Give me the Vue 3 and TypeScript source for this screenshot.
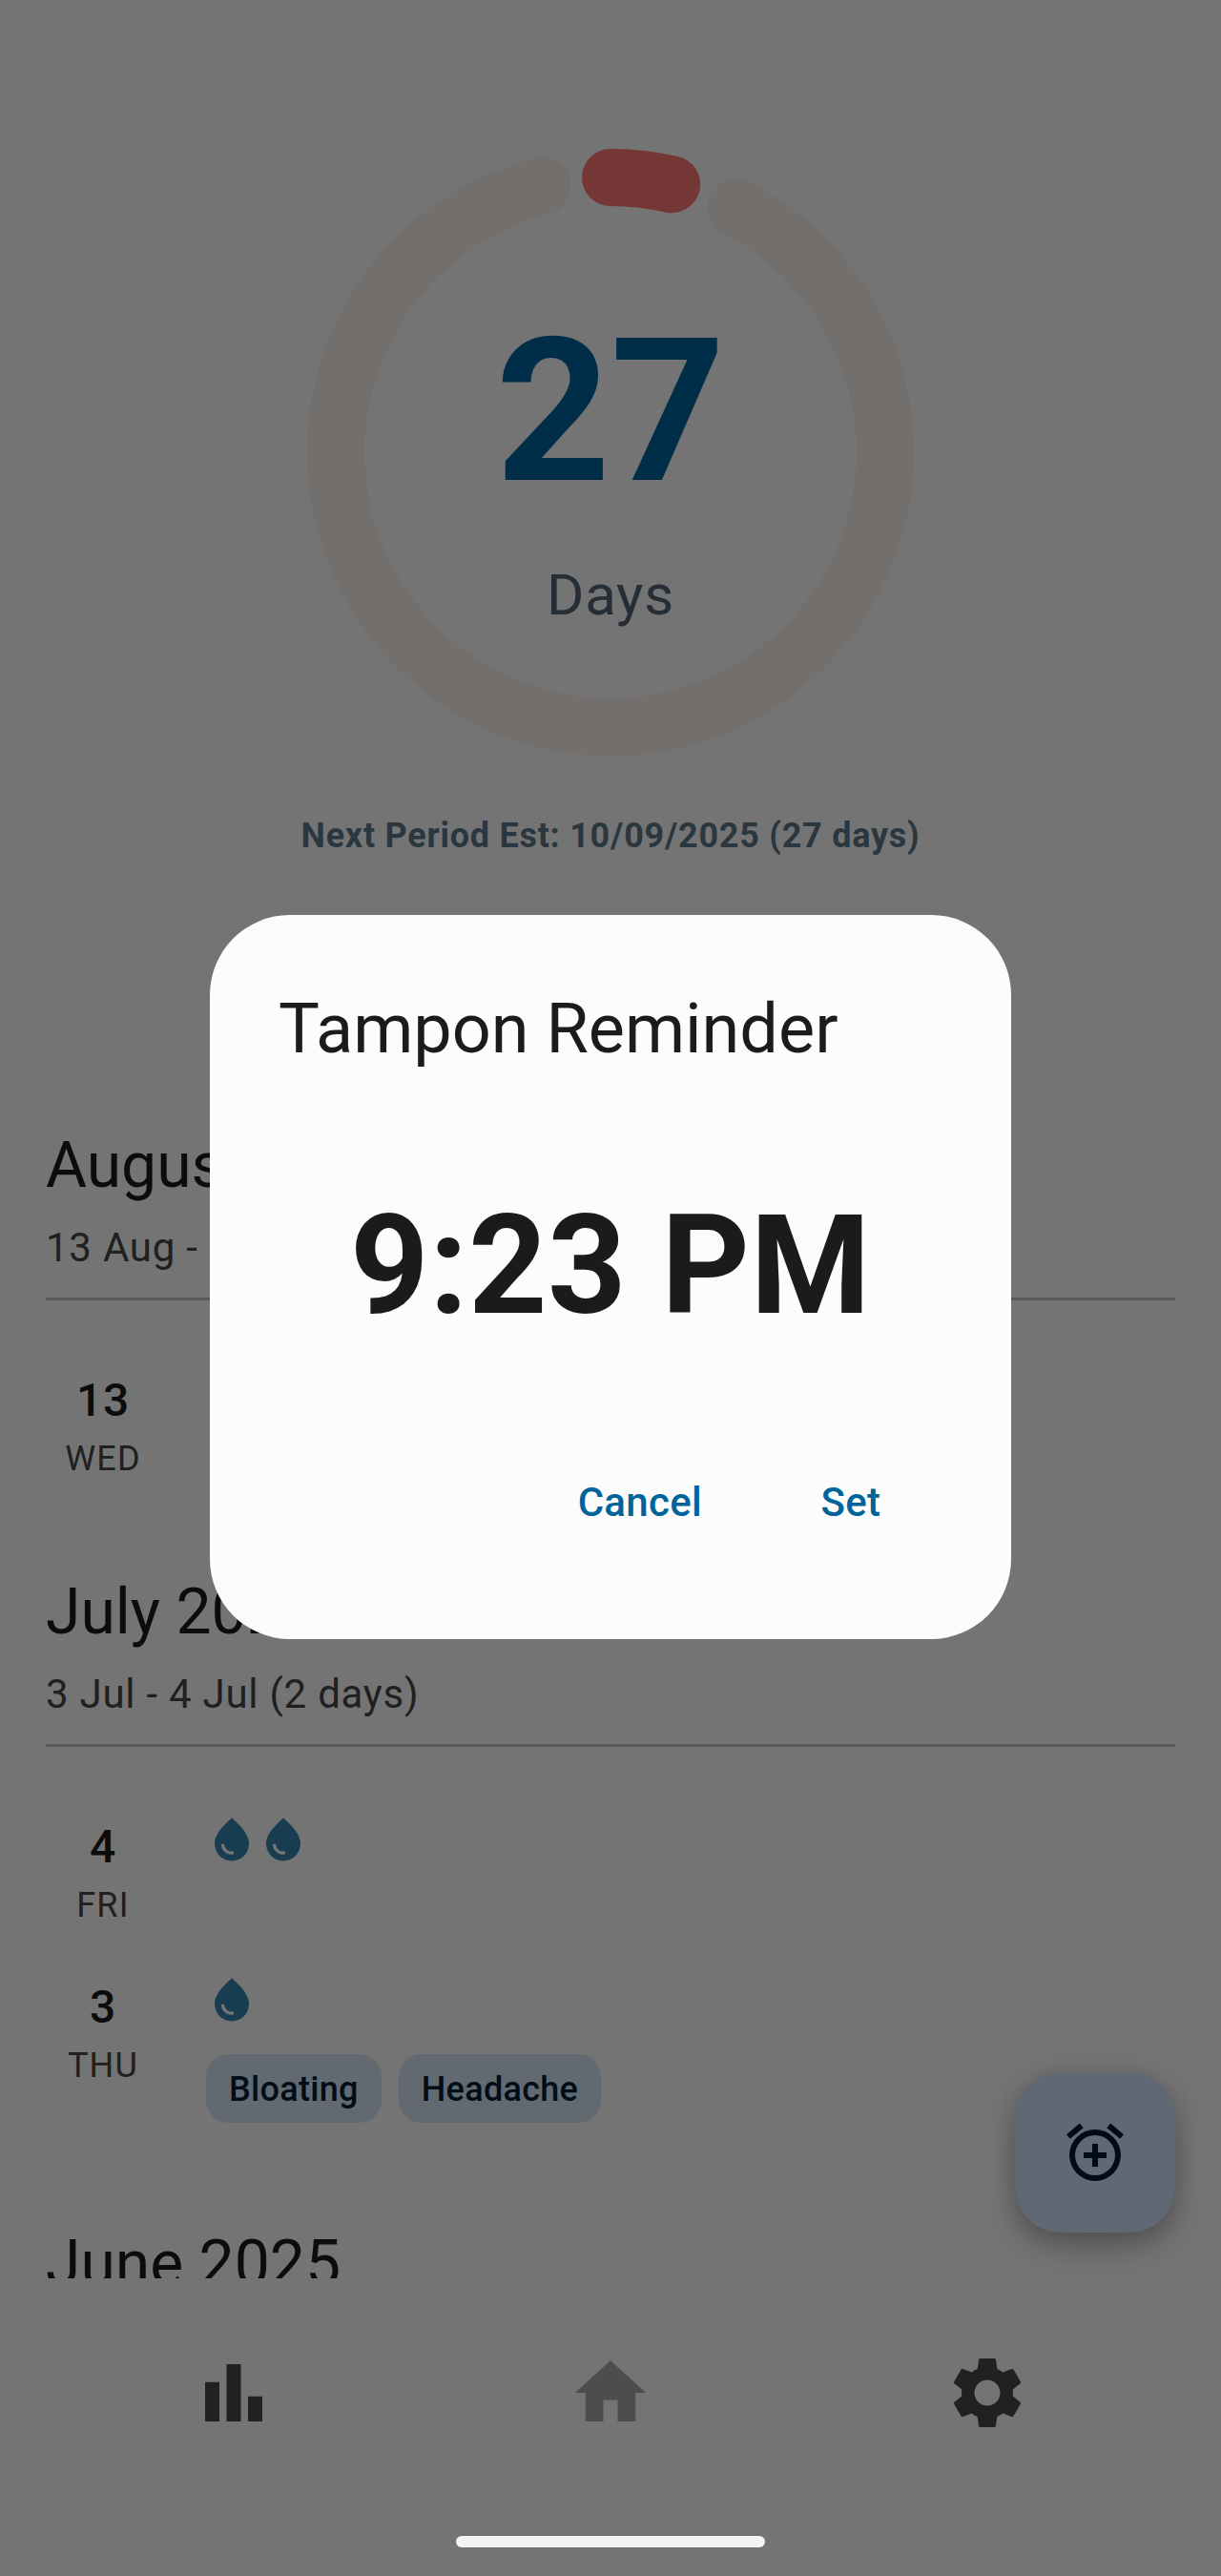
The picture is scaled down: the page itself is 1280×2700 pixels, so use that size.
<script setup lang="ts">
interface Entry {
  day: number
  weekday: string
  flow: number
  symptoms: string[]
}

interface Period {
  title: string
  range: string
  entries: Entry[]
}

const cycleLength = 28
const radius = 288
const center = 318

const point = (deg: number): string => {
  const rad = (deg * Math.PI) / 180
  return `${(center + radius * Math.sin(rad)).toFixed(2)} ${(center - radius * Math.cos(rad)).toFixed(2)}`
}

const arc = (from: number, to: number): string =>
  `M${point(from)}A${radius} ${radius} 0 ${to - from > 180 ? 1 : 0} 1 ${point(to)}`

const step = 360 / cycleLength
const elapsed = arc(0, step)
const remaining = arc(27.2, 345.6)

const periods: Period[] = [
  {
    title: 'August 2025',
    range: '13 Aug - 13 Aug (1 days)',
    entries: [{ day: 13, weekday: 'WED', flow: 0, symptoms: [] }],
  },
  {
    title: 'July 2025',
    range: '3 Jul - 4 Jul (2 days)',
    entries: [
      { day: 4, weekday: 'FRI', flow: 2, symptoms: [] },
      { day: 3, weekday: 'THU', flow: 1, symptoms: ['Bloating', 'Headache'] },
    ],
  },
  { title: 'June 2025', range: '', entries: [] },
]
</script>

<template>
  <div class="screen">
    <main class="content">
      <section class="summary">
        <div class="ring">
          <svg class="ring-art" viewBox="0 0 636 636" fill="none" stroke-width="60" stroke-linecap="round">
            <path :d="remaining" stroke="#736f6d" />
            <path :d="elapsed" stroke="#753636" />
          </svg>
          <div class="ring-text">
            <div class="count">27</div>
            <div class="unit">Days</div>
          </div>
        </div>
        <p class="estimate">Next Period Est: 10/09/2025 (27 days)</p>
      </section>

      <section v-for="period in periods" :key="period.title" class="period">
        <h2 class="title">{{ period.title }}</h2>
        <p class="range">{{ period.range }}</p>
        <hr class="rule" />
        <div class="entries">
          <article v-for="entry in period.entries" :key="entry.day" class="entry">
            <div class="date">
              <span class="day">{{ entry.day }}</span>
              <span class="weekday">{{ entry.weekday }}</span>
            </div>
            <div class="details">
              <div class="drops">
                <svg v-for="n in entry.flow" :key="n" class="drop" viewBox="0 0 24 24">
                  <path
                    d="M12 2c-5.33 4.55-8 8.48-8 11.8 0 4.98 3.8 8.2 8 8.2s8-3.22 8-8.2c0-3.32-2.67-7.25-8-11.8zM7.83 14c.37 0 .67.26.74.62.41 2.22 2.28 2.98 3.64 2.87.43-.02.79.32.79.75 0 .4-.32.73-.72.75-2.13.13-4.62-1.09-5.19-4.12-.08-.45.28-.87.74-.87z"
                  />
                </svg>
              </div>
              <div v-if="entry.symptoms.length" class="chips">
                <span v-for="symptom in entry.symptoms" :key="symptom" class="chip">{{ symptom }}</span>
              </div>
            </div>
          </article>
        </div>
      </section>
    </main>

    <nav class="nav">
      <svg class="nav-icon" viewBox="0 0 24 24"><path d="M4 9h4v11H4zM16 13h4v7h-4zM10 4h4v16h-4z" /></svg>
      <svg class="nav-icon current" viewBox="0 0 24 24"><path d="M10 20v-6h4v6h5v-8h3L12 3 2 12h3v8z" /></svg>
      <svg class="nav-icon" viewBox="0 0 24 24">
        <path
          d="M19.14 12.94c.04-.3.06-.61.06-.94 0-.32-.02-.64-.07-.94l2.03-1.58c.18-.14.23-.41.12-.61l-1.92-3.32c-.12-.22-.37-.29-.59-.22l-2.39.96c-.5-.38-1.03-.7-1.62-.94l-.36-2.54c-.04-.24-.24-.41-.48-.41h-3.84c-.24 0-.43.17-.47.41l-.36 2.54c-.59.24-1.13.57-1.62.94l-2.39-.96c-.22-.08-.47 0-.59.22L2.74 8.87c-.12.21-.08.47.12.61l2.03 1.58c-.05.3-.09.63-.09.94s.02.64.07.94l-2.03 1.58c-.18.14-.23.41-.12.61l1.92 3.32c.12.22.37.29.59.22l2.39-.96c.5.38 1.03.7 1.62.94l.36 2.54c.05.24.24.41.48.41h3.84c.24 0 .44-.17.47-.41l.36-2.54c.59-.24 1.13-.56 1.62-.94l2.39.96c.22.08.47 0 .59-.22l1.92-3.32c.12-.22.07-.47-.12-.61l-2.01-1.58zM12 15.6c-1.98 0-3.6-1.62-3.6-3.6s1.62-3.6 3.6-3.6 3.6 1.62 3.6 3.6-1.62 3.6-3.6 3.6z"
        />
      </svg>
    </nav>
    <footer class="gesture"><div class="handle"></div></footer>

    <button class="fab" type="button" aria-label="Add reminder">
      <svg class="fab-icon" viewBox="0 0 24 24">
        <path
          d="M7.88 3.39 6.6 1.86 2 5.71l1.29 1.53zM22 5.72l-4.6-3.86-1.29 1.53 4.6 3.86zM12 4a9 9 0 1 0 0 18 9 9 0 0 0 0-18zm0 16a7 7 0 1 1 0-14 7 7 0 0 1 0 14zm1-11h-2v3H8v2h3v3h2v-3h3v-2h-3z"
        />
      </svg>
    </button>

    <div class="dialog" role="dialog">
      <h1 class="dialog-title">Tampon Reminder</h1>
      <div class="time">9:23 PM</div>
      <div class="actions">
        <button class="action" type="button">Cancel</button>
        <button class="action" type="button">Set</button>
      </div>
    </div>
  </div>
</template>

<style>
body {
  margin: 0;
  background: #747474;
}
</style>

<style scoped>
.screen {
  position: relative;
  display: flex;
  flex-direction: column;
  width: 1280px;
  height: 2700px;
  overflow: hidden;
  background: #747474;
  color: #0c0c0c;
  font-family: Roboto, sans-serif;
}

.content {
  flex: none;
  height: 2388px;
  overflow: hidden;
}

.summary {
  display: flex;
  flex-direction: column;
  align-items: center;
  box-sizing: border-box;
  height: 1180px;
  padding-top: 156px;
}

.ring {
  display: grid;
  width: 636px;
  height: 636px;
}

.ring-art,
.ring-text {
  grid-area: 1 / 1;
}

.ring-art {
  width: 636px;
  height: 636px;
}

.ring-text {
  padding-top: 155px;
  text-align: center;
}

.count {
  font-size: 210px;
  font-weight: 700;
  line-height: 240px;
  color: #002d47;
}

.unit {
  margin-top: 31px;
  font-size: 60px;
  line-height: 84px;
  letter-spacing: 0.75px;
  color: #262d34;
}

.estimate {
  margin: 60px 0 0;
  font-size: 36px;
  font-weight: 700;
  line-height: 48px;
  letter-spacing: 0.75px;
  color: #2b373f;
}

.period {
  padding: 0 48px 96px;
}

.title {
  margin: 0;
  font-size: 66px;
  font-weight: 400;
  line-height: 84px;
}

.range {
  height: 60px;
  margin: 14px 0 22px;
  font-size: 42px;
  line-height: 60px;
  letter-spacing: 0.75px;
  color: #202020;
}

.rule {
  height: 3px;
  margin: 0 0 69px;
  border: 0;
  background: #5a5a5a;
}

.entries {
  display: flex;
  flex-direction: column;
  gap: 48px;
}

.entry {
  display: flex;
  gap: 48px;
  min-height: 120px;
}

.date {
  display: flex;
  flex-direction: column;
  align-items: center;
  width: 120px;
  height: 120px;
}

.day {
  font-size: 48px;
  font-weight: 500;
  line-height: 72px;
  letter-spacing: 0.6px;
}

.weekday {
  margin-top: 1px;
  font-size: 36px;
  line-height: 48px;
  letter-spacing: 1.2px;
  color: #202020;
}

.details {
  padding-top: 1px;
}

.drops {
  display: flex;
  height: 54px;
}

.drop {
  width: 54px;
  height: 54px;
  fill: #193d50;
}

.chips {
  display: flex;
  gap: 18px;
  padding: 30px 0 10px;
}

.chip {
  padding: 13px 24px 11px;
  border-radius: 24px;
  background: #626970;
  color: #010d17;
  font-size: 36px;
  font-weight: 500;
  line-height: 48px;
  letter-spacing: 0.3px;
}

.nav {
  display: flex;
  align-items: center;
  justify-content: center;
  gap: 304.67px;
  height: 240px;
}

.nav-icon {
  width: 90px;
  height: 90px;
  fill: #212121;
}

.nav-icon.current {
  fill: #4d4d4d;
}

.gesture {
  display: flex;
  justify-content: center;
  padding-top: 30px;
}

.handle {
  width: 324px;
  height: 12px;
  border-radius: 6px;
  background: #f4f4f4;
}

.fab {
  position: absolute;
  right: 48px;
  bottom: 360px;
  display: flex;
  align-items: center;
  justify-content: center;
  width: 168px;
  height: 168px;
  padding: 0;
  border: 0;
  border-radius: 48px;
  background: #5f6873;
  box-shadow: 0 14px 30px rgba(0, 0, 0, 0.28), 0 0 24px rgba(0, 0, 0, 0.06);
}

.fab-icon {
  width: 72px;
  height: 72px;
  fill: #000c15;
}

.dialog {
  position: absolute;
  top: 958.5px;
  left: 220px;
  box-sizing: border-box;
  width: 840px;
  height: 759px;
  padding: 72px;
  border-radius: 84px;
  background: #fcfcfc;
  color: #1b1b1b;
}

.dialog-title {
  margin: 0;
  font-size: 72px;
  font-weight: 400;
  line-height: 96px;
}

.time {
  margin-top: 116px;
  font-size: 144px;
  font-weight: 700;
  line-height: 168px;
  letter-spacing: 0.4px;
  text-align: center;
}

.actions {
  display: flex;
  justify-content: flex-end;
  gap: 24px;
  margin-top: 134px;
}

.action {
  min-width: 192px;
  padding: 0 36px;
  border: 0;
  background: none;
  color: #00649b;
  font: 500 42px/60px Roboto, sans-serif;
  letter-spacing: 0.3px;
}
</style>
